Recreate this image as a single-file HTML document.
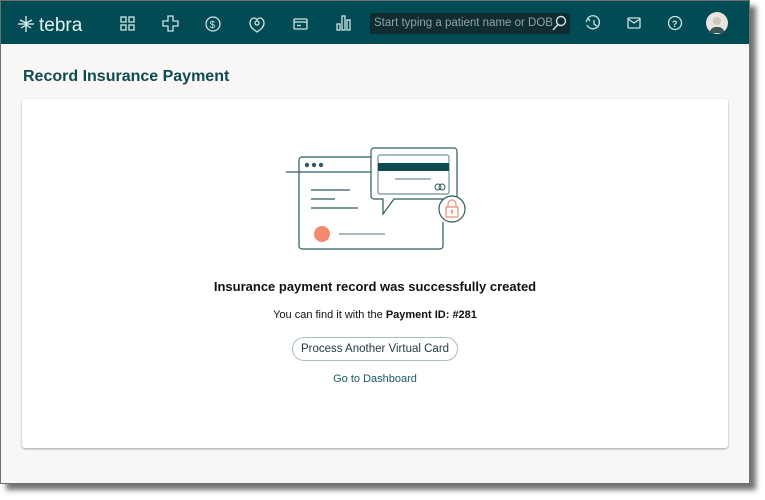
<!DOCTYPE html>
<html><head><meta charset="utf-8"><style>
html,body{margin:0;padding:0;background:#fff;width:765px;height:500px;overflow:hidden;font-family:"Liberation Sans",sans-serif}
.frame{position:absolute;left:0;top:0;width:748px;height:482px;background:#f8f7f5;border:1px solid #6f6f6f;box-shadow:6px 6px 5px rgba(0,0,0,.55)}
.hdr{position:absolute;left:0;top:0;width:748px;height:43px;background:#004b54}
.hdr svg{position:absolute}
.search{position:absolute;left:369px;top:12px;width:200px;height:21px;background:#0f2d31;border-radius:2px;color:#8fa3a6;font-size:11.5px;line-height:21px;padding-left:4px;box-sizing:border-box;white-space:nowrap;overflow:hidden}
.title{position:absolute;left:22px;top:67px;font-size:16px;font-weight:bold;color:#0e4a52}
.card{position:absolute;left:21px;top:98px;width:706px;height:349px;background:#fff;border-radius:3px;box-shadow:0 1px 2px rgba(0,0,0,.35)}
.h{position:absolute;left:0;width:706px;text-align:center;color:#111}
.btn{position:absolute;left:270px;top:238px;width:166px;height:24px;border:1px solid #a9bfbd;border-radius:12px;text-align:center;line-height:23px;font-size:11.5px;color:#1e3a40;box-sizing:border-box}
</style></head><body>
<div class="frame">
<div class="hdr">
<svg width="765" height="43" viewBox="0 0 765 43" fill="none" stroke="#cfe3e2" stroke-width="1.3">
<g stroke="#e6f0ef"><line x1="25" y1="15" x2="25" y2="31"/><line x1="17" y1="23" x2="33" y2="23"/><path d="M19 19l6 3 6-3M20 27l5-3 5 3"/></g>
<text x="38" y="30" fill="#e6f0ef" stroke="none" font-family="Liberation Sans" font-size="19">tebra</text>
<rect x="120" y="16" width="5" height="5"/><rect x="128" y="16" width="5" height="5"/><rect x="120" y="24" width="5" height="5"/><rect x="128" y="24" width="5" height="5"/>
<path d="M167 15h5v5h5v5h-5v5h-5v-5h-5v-5h5z"/>
<circle cx="212" cy="23" r="7"/><text x="208.5" y="27" fill="#cfe3e2" stroke="none" font-size="10" font-family="Liberation Sans">$</text>
<path d="M256 31c-4-3-7-5-7-9 0-3 2-5 4-5 1.5 0 2.5 1 3 2 .5-1 1.5-2 3-2 2 0 4 2 4 5 0 4-3 6-7 9z"/><circle cx="256" cy="22" r="2"/>
<rect x="293" y="18" width="13" height="10" rx="1"/><line x1="293" y1="21" x2="306" y2="21"/><line x1="296" y1="24.5" x2="300" y2="24.5"/>
<rect x="336" y="23" width="3" height="6"/><rect x="341" y="15" width="3" height="14"/><rect x="346" y="19" width="3" height="10"/>
<path d="M587 17a6.5 6.5 0 1 1-1 7"/><path d="M585 21l2-4 2 3"/><path d="M593 19v4l3 2"/>
<rect x="627" y="17" width="12" height="10" rx="1"/><path d="M627 18l6 4 6-4"/>
<circle cx="674" cy="22" r="6.5"/><text x="671" y="26" fill="#cfe3e2" stroke="none" font-size="9" font-weight="bold" font-family="Liberation Sans">?</text>
<circle cx="716" cy="22" r="11" fill="#e8e4df" stroke="none"/>
<path d="M708 32c2-5 4-6 8-6s6 1 8 6" fill="#3c5656" stroke="none"/>
<circle cx="716" cy="20" r="4" fill="#cfc6bb" stroke="none"/>
</svg>
<div class="search">Start typing a patient name or DOB</div>
<svg style="position:absolute;left:548px;top:12px" width="21" height="21" viewBox="0 0 21 21" fill="none" stroke="#cfe3e2" stroke-width="1.4"><circle cx="12" cy="8" r="4.5"/><line x1="9" y1="11.5" x2="4" y2="17"/></svg>
</div>
<div class="title">Record Insurance Payment</div>
<div class="card">
<svg style="position:absolute;left:0;top:0" width="706" height="160" viewBox="21 98 706 160" fill="none" stroke="#2f5c60" stroke-width="1.2">
<path d="M370 156H301a3 3 0 0 0-3 3v86a3 3 0 0 0 3 3h138a3 3 0 0 0 3-3v-24"/>
<line x1="285" y1="171" x2="370" y2="171"/>
<circle cx="306" cy="164" r="1.6" fill="#2f5c60"/><circle cx="313" cy="164" r="1.6" fill="#2f5c60"/><circle cx="320" cy="164" r="1.6" fill="#2f5c60"/>
<line x1="310" y1="189" x2="349" y2="189"/><line x1="310" y1="198" x2="334" y2="198"/><line x1="310" y1="207" x2="357" y2="207"/>
<circle cx="321" cy="233" r="8" fill="#f5896e" stroke="none"/>
<line x1="338" y1="233" x2="384" y2="233" stroke="#6e9596"/>
<path d="M373 147h80a3 3 0 0 1 3 3v45a3 3 0 0 1-3 3h-60l-11 15v-15h-9a3 3 0 0 1-3-3v-45a3 3 0 0 1 3-3z" fill="#fff"/>
<rect x="377" y="154" width="71" height="39" rx="2" stroke="#6e9596"/>
<rect x="377" y="162" width="71" height="8" fill="#0e4a52" stroke="none"/>
<line x1="394" y1="178" x2="430" y2="178" stroke="#6e9596"/>
<circle cx="437" cy="186" r="3" stroke-width="1"/><circle cx="441" cy="186" r="3" stroke-width="1"/>
<circle cx="451" cy="208" r="13" fill="#fff"/>
<rect x="445" y="206" width="12" height="10" rx="1" stroke="#f08a70"/>
<path d="M447 206v-3a4 4 0 0 1 8 0v3" stroke="#f08a70"/>
<circle cx="451" cy="210" r="1.2" fill="#f08a70" stroke="none"/><line x1="451" y1="210" x2="451" y2="213" stroke="#f08a70"/>
</svg>
<div class="h" style="top:180px;font-size:13px;font-weight:bold">Insurance payment record was successfully created</div>
<div class="h" style="top:210px;font-size:11px">You can find it with the <b>Payment ID: #281</b></div>
<div class="btn">Process Another Virtual Card</div>
<div class="h" style="top:274px;font-size:11px;color:#1b5a62">Go to Dashboard</div>
</div>
</div>
</body></html>
